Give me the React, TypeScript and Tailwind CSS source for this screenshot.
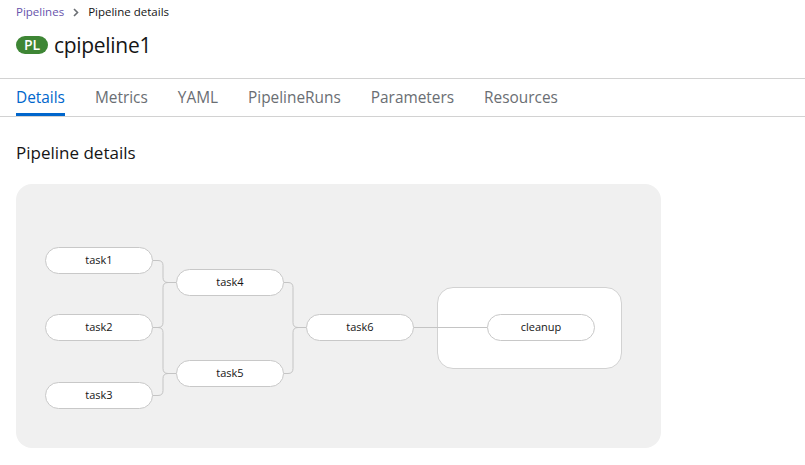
const font = { fontFamily: '"Open Sans", "Noto Sans", sans-serif' };

interface TaskNode {
  name: string;
  x: number;
  y: number;
}

const nodes: TaskNode[] = [
  { name: "task1", x: 29, y: 63 },
  { name: "task2", x: 29, y: 130 },
  { name: "task3", x: 29, y: 198 },
  { name: "task4", x: 160, y: 85 },
  { name: "task5", x: 160, y: 176 },
  { name: "task6", x: 290, y: 130 },
  { name: "cleanup", x: 471, y: 130 },
];

const W = 108;
const H = 27;

// elbow connector with rounded corners
function elbow(x1: number, y1: number, x2: number, y2: number, jx: number) {
  const r = 5;
  const dir = y2 > y1 ? 1 : -1;
  if (Math.abs(y2 - y1) < 1) return `M${x1} ${y1} H${x2}`;
  return `M${x1} ${y1} H${jx - r} Q${jx} ${y1} ${jx} ${y1 + r * dir} V${y2 - r * dir} Q${jx} ${y2} ${jx + r} ${y2} H${x2}`;
}

function mid(n: TaskNode) {
  return n.y + H / 2;
}

function Diagram() {
  const [t1, t2, t3, t4, t5, t6, cl] = nodes;
  const edges = [
    elbow(t1.x + W, mid(t1), t4.x, mid(t4), 147),
    elbow(t2.x + W, mid(t2), t4.x, mid(t4), 147),
    elbow(t2.x + W, mid(t2), t5.x, mid(t5), 147),
    elbow(t3.x + W, mid(t3), t5.x, mid(t5), 147),
    elbow(t4.x + W, mid(t4), t6.x, mid(t6), 277),
    elbow(t5.x + W, mid(t5), t6.x, mid(t6), 277),
    `M${t6.x + W} ${mid(t6)} H${cl.x}`,
  ];

  return (
    <div className="relative h-[264px] w-[645px] rounded-[16px] bg-[#f0f0f0]">
      <div className="absolute left-[421px] top-[103px] h-[82px] w-[185px] rounded-[16px] border border-[#d2d2d2] bg-white" />
      <svg className="absolute inset-0" width="645" height="264">
        {edges.map((d, i) => (
          <path key={i} d={d} fill="none" stroke="#c4c4c4" strokeWidth="1" />
        ))}
      </svg>
      {nodes.map((n) => (
        <div
          key={n.name}
          className="absolute flex h-[27px] w-[108px] items-center justify-center rounded-full border border-[#c8c8c8] bg-white text-[11px] text-[#151515]"
          style={{ left: n.x, top: n.y }}
        >
          {n.name}
        </div>
      ))}
    </div>
  );
}

const tabs = ["Details", "Metrics", "YAML", "PipelineRuns", "Parameters", "Resources"];

export default function App() {
  return (
    <div className="h-[465px] w-[805px] overflow-hidden bg-white text-[#151515]" style={font}>
      <div className="px-4 pt-[4px]">
        <div className="flex items-center gap-[9px] text-[11.5px] leading-[16px]">
          <span className="text-[#6753ac]">Pipelines</span>
          <svg width="6" height="9" viewBox="0 0 6 9">
            <path d="M1 1l3.5 3.5L1 8" fill="none" stroke="#6a6e73" strokeWidth="1.6" />
          </svg>
          <span className="text-[#151515]">Pipeline details</span>
        </div>
        <div className="mt-[11px] flex h-[28px] items-center gap-[6px]">
          <span className="flex h-[18px] w-[32px] items-center justify-center rounded-full bg-[#3e8635] text-[14px] font-semibold leading-none text-white">
            PL
          </span>
          <span className="text-[21px] leading-none tracking-[-0.3px]">cpipeline1</span>
        </div>
      </div>
      <div className="mt-[19px] border-y border-[#d2d2d2]">
        <div className="flex h-[37px] items-stretch gap-[30px] px-4">
          {tabs.map((t, i) => (
            <div
              key={t}
              className={
                i === 0
                  ? "flex items-center border-b-[3px] border-[#0066cc] pt-[3px] text-[15.4px] text-[#0066cc]"
                  : "flex items-center border-b-[3px] border-transparent pt-[3px] text-[15.4px] text-[#6a6e73]"
              }
            >
              {t}
            </div>
          ))}
        </div>
      </div>
      <div className="px-4">
        <h2 className="mt-[24px] text-[17px] leading-[24px]">Pipeline details</h2>
        <div className="mt-[19px]">
          <Diagram />
        </div>
      </div>
    </div>
  );
}
